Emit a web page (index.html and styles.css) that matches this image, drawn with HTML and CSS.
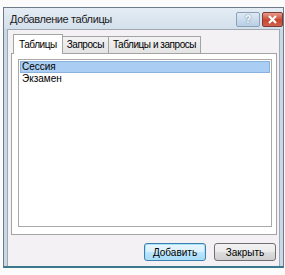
FILE: index.html
```html
<!DOCTYPE html>
<html lang="ru">
<head>
  <meta charset="UTF-8" />
  <title>Добавление таблицы</title>
  <link rel="stylesheet" href="styles.css">
</head>
<body>
  <div class="window">
    <div class="titlebar">
      <span class="title">Добавление таблицы</span>
      <div class="caption-buttons">
        <span class="cap-btn help">?</span>
        <span class="cap-btn close">
          <svg width="11" height="9" viewBox="0 0 11 9"><path d="M2 1 L9 8 M9 1 L2 8" stroke="#fff" stroke-width="2.2"/></svg>
        </span>
      </div>
    </div>
    <div class="client">
      <div class="tabs">
        <span class="tab active">Таблицы</span>
        <span class="tab">Запросы</span>
        <span class="tab">Таблицы и запросы</span>
      </div>
      <div class="tab-panel">
        <ul class="list">
          <li class="selected">Сессия</li>
          <li>Экзамен</li>
        </ul>
      </div>
      <div class="buttons">
        <button class="btn default">Добавить</button>
        <button class="btn">Закрыть</button>
      </div>
    </div>
  </div>
</body>
</html>
```
FILE: styles.css
```css
body {
  margin: 0;
  background: #fbfbfc;
  font-family: 'Liberation Sans', Arial, sans-serif;
  font-size: 10px;
  color: #000;
}

.window {
  margin: 7px 1px 0 3px;
  height: 261px;
  border: 1px solid #6d7a88;
  border-bottom: 2px solid #3a7a8c;
  background: #c9d8e6;
  box-sizing: border-box;
  display: flex;
  flex-direction: column;
}

.titlebar {
  height: 21px;
  display: flex;
  align-items: center;
  justify-content: space-between;
  padding-left: 6px;
  background: linear-gradient(to bottom, #e4ecf4, #d3e0ec);
}

.title {
  font-size: 11px;
  letter-spacing: -0.4px;
  color: #1b1b1b;
}

.caption-buttons {
  display: flex;
  align-self: flex-start;
  gap: 2px;
  margin-top: 4px;
}

.cap-btn {
  height: 13px;
  display: flex;
  align-items: center;
  justify-content: center;
  border: 1px solid #8ea0b4;
  border-radius: 2px;
  font-size: 10px;
  font-weight: bold;
}

.help {
  width: 22px;
  color: #fff;
  background: linear-gradient(to bottom, #dde9f5, #b8cfe6);
  text-shadow: 0 0 2px #4b6d95;
}

.close {
  width: 19px;
  border-color: #7e3b35;
  background: linear-gradient(to bottom, #e79b8e, #c8462f 55%, #d0624b);
}

.client {
  flex: 1;
  margin: 0 3px;
  border: 1px solid #a0a8b2;
  border-bottom: none;
  background: #f4f1f4;
  padding: 3px 2px 0 3px;
  display: flex;
  flex-direction: column;
}

.tabs {
  display: flex;
  align-items: flex-end;
  height: 20px;
  padding-left: 2px;
}

.tab {
  height: 17px;
  padding: 0 4px;
  line-height: 16px;
  letter-spacing: -0.45px;
  border: 1px solid #a4a4a4;
  border-bottom: none;
  border-left: none;
  background: linear-gradient(to bottom, #f3f3f3, #e3e3e3);
  box-sizing: border-box;
}

.tab.active {
  height: 20px;
  padding: 0 5px;
  border-left: 1px solid #a4a4a4;
  background: #fff;
  margin-bottom: -1px;
  position: relative;
  line-height: 19px;
}

.tab-panel {
  height: 182px;
  border: 1px solid #a4a4a4;
  background: #fff;
  padding: 5px 4px 7px 6px;
  box-sizing: border-box;
}

.list {
  list-style: none;
  margin: 0;
  padding: 1px;
  height: 100%;
  border: 1px solid #a9a9a9;
  box-sizing: border-box;
}

.list li {
  height: 11px;
  line-height: 11px;
  padding-left: 2px;
}

.list li.selected {
  background: #a9cdf3;
  border: 1px solid #89b1dc;
  padding-left: 1px;
  height: 10px;
  line-height: 10px;
}

.buttons {
  display: flex;
  justify-content: flex-end;
  gap: 8px;
  margin-top: 8px;
  padding-right: 1px;
}

.btn {
  width: 62px;
  height: 18px;
  padding: 0;
  font-family: 'Liberation Sans', Arial, sans-serif;
  font-size: 10px;
  border: 1px solid #707070;
  border-radius: 3px;
  background: linear-gradient(to bottom, #f2f2f2 0%, #ebebeb 50%, #dddddd 51%, #cfcfcf 100%);
}

.btn.default {
  border-color: #3c7fb1;
  background: linear-gradient(to bottom, #eaf6fd 0%, #d9f0fc 50%, #bee6fd 51%, #a7d9f5 100%);
  box-shadow: inset 0 0 0 1px #a9e2f7;
}
```
